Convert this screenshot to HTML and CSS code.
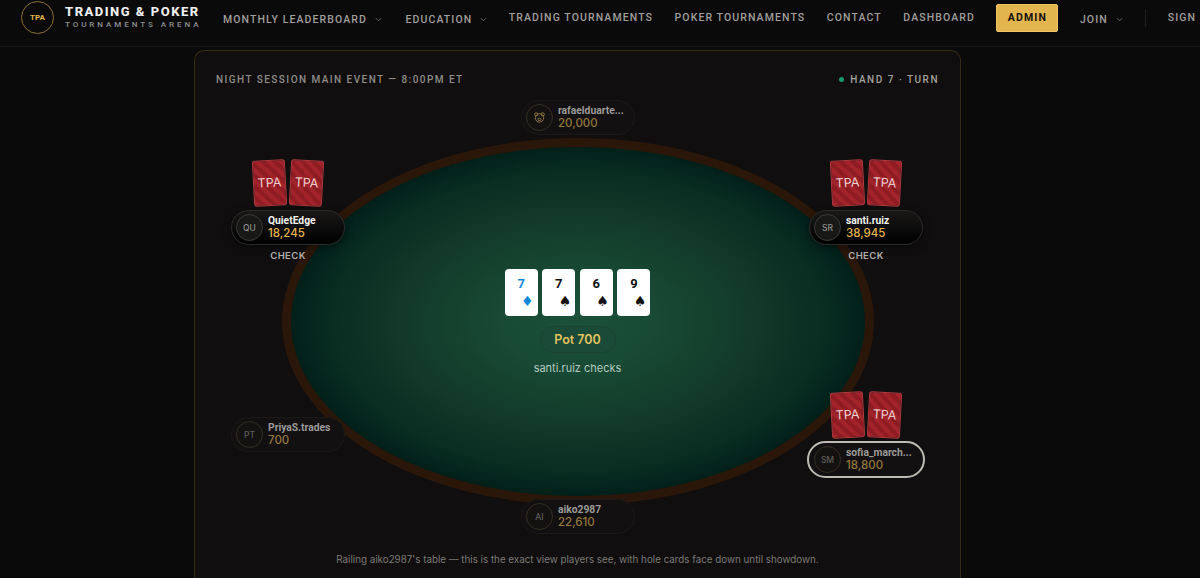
FILE: index.html
```html
<!DOCTYPE html>
<html lang="en">
	<head>
		<title>Trading &amp; Poker Tournaments Arena</title>
		<meta charset="utf-8" name="viewport" content="width=device-width, initial-scale=1">
		<link rel="stylesheet" href="styles.css">
	</head>
	<body>
		<header class="topbar">
			<div class="logo">TPA</div>
			<div class="brand">
				<span class="brand-name">TRADING &amp; POKER</span>
				<span class="brand-sub">TOURNAMENTS ARENA</span>
			</div>
			<nav class="nav">
				<a class="navlink drop monthly">MONTHLY LEADERBOARD <svg class="chev" viewBox="0 0 8 5"><path d="M1 1l3 3 3-3"/></svg></a>
				<a class="navlink drop">EDUCATION <svg class="chev" viewBox="0 0 8 5"><path d="M1 1l3 3 3-3"/></svg></a>
				<a class="navlink">TRADING TOURNAMENTS</a>
				<a class="navlink">POKER TOURNAMENTS</a>
				<a class="navlink">CONTACT</a>
				<a class="navlink">DASHBOARD</a>
				<a class="admin">ADMIN</a>
				<a class="navlink drop">JOIN <svg class="chev" viewBox="0 0 8 5"><path d="M1 1l3 3 3-3"/></svg></a>
				<span class="divider"></span>
				<a class="navlink">SIGN</a>
			</nav>
		</header>

		<main class="panel">
			<div class="panel-head">
				<span>NIGHT SESSION MAIN EVENT — 8:00PM ET</span>
				<span class="hand"><i class="dot"></i>HAND 7 · TURN</span>
			</div>

			<div class="stage">
				<div class="table">
					<div class="board">
						<div class="card blue"><b>7</b><span>♦</span></div>
						<div class="card"><b>7</b><span>♠</span></div>
						<div class="card"><b>6</b><span>♠</span></div>
						<div class="card"><b>9</b><span>♠</span></div>
					</div>
					<div class="pot">Pot 700</div>
					<div class="last-action">santi.ruiz checks</div>
				</div>

				<!-- seats sit on the table, clockwise from the top -->
				<div class="seat seat-top out">
					<div class="pill">
						<div class="avatar">
							<svg class="bear" viewBox="0 0 16 16"><circle cx="4" cy="4.2" r="2"/><circle cx="12" cy="4.2" r="2"/><circle cx="8" cy="8.5" r="5.2"/><ellipse cx="8" cy="10.3" rx="2" ry="1.4"/></svg>
						</div>
						<div class="info"><div class="name">rafaelduarte...</div><div class="stack">20,000</div></div>
					</div>
				</div>

				<div class="seat seat-right">
					<div class="hole"><div class="back left">TPA</div><div class="back right">TPA</div></div>
					<div class="pill">
						<div class="avatar">SR</div>
						<div class="info"><div class="name">santi.ruiz</div><div class="stack">38,945</div></div>
					</div>
					<div class="action">CHECK</div>
				</div>

				<div class="seat seat-turn out">
					<div class="hole"><div class="back left">TPA</div><div class="back right">TPA</div></div>
					<div class="pill">
						<div class="avatar">SM</div>
						<div class="info"><div class="name">sofia_march...</div><div class="stack">18,800</div></div>
					</div>
				</div>

				<div class="seat seat-bottom out">
					<div class="pill">
						<div class="avatar">AI</div>
						<div class="info"><div class="name">aiko2987</div><div class="stack">22,610</div></div>
					</div>
				</div>

				<div class="seat seat-lower-left out">
					<div class="pill">
						<div class="avatar">PT</div>
						<div class="info"><div class="name">PriyaS.trades</div><div class="stack">700</div></div>
					</div>
				</div>

				<div class="seat seat-upper-left">
					<div class="hole"><div class="back left">TPA</div><div class="back right">TPA</div></div>
					<div class="pill">
						<div class="avatar">QU</div>
						<div class="info"><div class="name">QuietEdge</div><div class="stack">18,245</div></div>
					</div>
					<div class="action">CHECK</div>
				</div>
			</div>

			<p class="caption">Railing aiko2987's table — this is the exact view players see, with hole cards face down until showdown.</p>
		</main>
	</body>
</html>
```

FILE: styles.css
```css
* {box-sizing: border-box}

:root {
	--gold: #e3b54f;
	--display: "Roboto", "Liberation Sans", sans-serif;
	--text: "Inter", "Liberation Sans", sans-serif;
}

body, html {
	height: 100%;
	margin: 0;
	overflow: hidden;
	background-color: #0a0a0a;
	font-family: var(--text);
}

/* Top bar */
.topbar {
	display: flex;
	height: 47px;
	padding: 1px 0 12px 21px;
	align-items: center;
	border-bottom: 1px solid #171511;
	white-space: nowrap;
}

.logo {
	display: flex;
	flex: none;
	width: 33px;
	height: 33px;
	align-items: center;
	justify-content: center;
	border: 1px solid #8a6f35;
	border-radius: 50%;
	color: var(--gold);
	font: 700 8px var(--display);
}

.brand {
	display: flex;
	flex: none;
	flex-direction: column;
	width: 135px;
	margin-left: 11px;
}

.brand-name {
	color: #eee;
	font: 800 13px/14px var(--display);
	letter-spacing: 1.5px;
}

.brand-sub {
	color: #8f8f8f;
	font: 500 8px/11px var(--display);
	letter-spacing: 2.95px;
}

.nav {
	display: flex;
	margin-left: 23px;
	align-items: center;
	gap: 21.5px;
}

.navlink {
	display: flex;
	flex: none;
	align-items: center;
	color: #a09e9a;
	font: 500 10.5px var(--display);
	letter-spacing: 1.1px;
}

.drop {
	padding-top: 3px;
}

.chev {
	width: 7px;
	height: 5px;
	margin-left: 8px;
	fill: none;
	stroke: #77756f;
	stroke-width: 1;
}

.monthly {
	margin-right: 2px;
}

.admin {
	flex: none;
	width: 62px;
	height: 28px;
	border: 1px solid #f0c664;
	border-radius: 2px;
	background-color: var(--gold);
	color: #16110a;
	font: 700 10.5px/26px var(--display);
	letter-spacing: 1.1px;
	text-align: center;
}

.divider {
	flex: none;
	width: 1px;
	height: 18px;
	margin-left: 1px;
	background-color: #1f1e1c;
}

/* Main panel */
.panel {
	width: 767px;
	height: 528px;
	margin: 3px 0 0 194px;
	padding: 21px;
	border: 1px solid #352b18;
	border-bottom: 0;
	border-radius: 10px 10px 0 0;
	background-color: #100e0e;
}

.panel-head {
	display: flex;
	height: 14px;
	align-items: center;
	justify-content: space-between;
	color: #8e8c88;
	font: 500 10px var(--display);
	letter-spacing: 1.45px;
}

.hand {
	display: flex;
	align-items: center;
	color: #a3a19c;
	letter-spacing: 1.5px;
}

.dot {
	width: 5px;
	height: 5px;
	margin-right: 6px;
	border-radius: 50%;
	background-color: #16996b;
}

/* Table */
.stage {
	position: relative;
	height: 450px;
	margin-top: 9px;
}

.table {
	display: flex;
	width: 592px;
	height: 367px;
	margin: 0 auto;
	position: relative;
	top: 43px;
	padding-top: 122px;
	flex-direction: column;
	align-items: center;
	border: 9px solid #2b1709;
	border-radius: 50%;
	background: radial-gradient(closest-side, #1b5039 0%, #184a35 27%, #12392a 62%, #0a2e22 85%, #01201a 100%);
}

.board {
	display: flex;
	gap: 4.6px;
}

.card {
	position: relative;
	width: 33px;
	height: 47px;
	border-radius: 4px;
	background-color: #fff;
	color: #111;
}

.card b {
	position: absolute;
	top: 7px;
	left: 0;
	width: 100%;
	text-align: center;
	font: 700 13px/16px var(--display);
}

.card span {
	position: absolute;
	right: 4px;
	bottom: 7px;
	font: 14px/16px "DejaVu Sans", sans-serif;
}

.blue {
	color: #1488d8;
}

.pot {
	width: 76px;
	height: 27px;
	margin-top: 10px;
	border: 1px solid #1a4332;
	border-radius: 14px;
	background-color: #1a4b38;
	color: #e3c25e;
	font: 600 12.5px/25px var(--text);
	text-align: center;
}

.last-action {
	margin-top: 8px;
	color: #b4cabf;
	font-size: 11px;
	line-height: 14px;
}

/* Seats */
.seat {
	position: absolute;
	width: 114px;
}

.seat-top {
	top: 5px;
	left: 305px;
}

.seat-right {
	top: 115px;
	left: 593px;
}

.seat-turn {
	top: 346px;
	left: 591px;
	width: 118px;
}

.seat-bottom {
	top: 404px;
	left: 305px;
}

.seat-lower-left {
	top: 322px;
	left: 15px;
}

.seat-upper-left {
	top: 115px;
	left: 15px;
}

.pill {
	display: flex;
	height: 35px;
	padding-left: 4px;
	align-items: center;
	border: 1px solid #2c2b29;
	border-radius: 18px;
	background: linear-gradient(#191817, #000);
	box-shadow: 0 2px 8px rgba(0, 0, 0, 0.5);
}

.avatar {
	display: flex;
	flex: none;
	width: 27px;
	height: 27px;
	align-items: center;
	justify-content: center;
	border: 1px solid #3c3b39;
	border-radius: 50%;
	background-color: #181817;
	color: #8d8c89;
	font: 500 8.5px var(--text);
}

.bear {
	width: 13px;
	height: 13px;
	fill: none;
	stroke: #a2834a;
	stroke-width: 1;
}

.info {
	margin-left: 5px;
	min-width: 0;
}

.name {
	color: #f1f0ee;
	font: 700 10.3px/12px var(--display);
}

.stack {
	color: var(--gold);
	font: 500 11.5px/13px var(--text);
}

.out .pill {
	border-color: #1c1a18;
	background: #121010;
	box-shadow: none;
}

.out .name {
	color: #9c9a97;
}

.out .stack {
	color: #95783d;
}

.out .avatar {
	border-color: #353026;
	background-color: #141211;
	color: #5e5c59;
}

.seat-turn .pill {
	height: 37px;
	padding-left: 5px;
	border: 2px solid #bdbcb4;
	border-radius: 19px;
}

.action {
	margin-top: 5px;
	color: #b0aeab;
	font: 600 9.5px/12px var(--text);
	letter-spacing: 0.4px;
	text-align: center;
}

.hole {
	position: absolute;
	bottom: 38px;
	left: 22px;
	display: flex;
	gap: 4px;
}

.seat-turn .hole {
	left: 24px;
	bottom: 40px;
}

.seat-right .hole, .seat-upper-left .hole {
	top: -50px;
	bottom: auto;
}

.back {
	width: 33px;
	height: 46px;
	border: 1px solid #b13a40;
	border-radius: 3px;
	background: repeating-linear-gradient(45deg, #a3232a 0, #a3232a 4px, #8f1c23 4px, #8f1c23 8px);
	color: #f1cfcf;
	font: 400 12.5px/44px var(--text);
	text-align: center;
}

.left {
	transform: rotate(-3deg);
}

.right {
	transform: rotate(3deg);
}

.caption {
	margin: 8px 0 0;
	color: #7c7a77;
	font-size: 9.8px;
	line-height: 14px;
	text-align: center;
}
```
